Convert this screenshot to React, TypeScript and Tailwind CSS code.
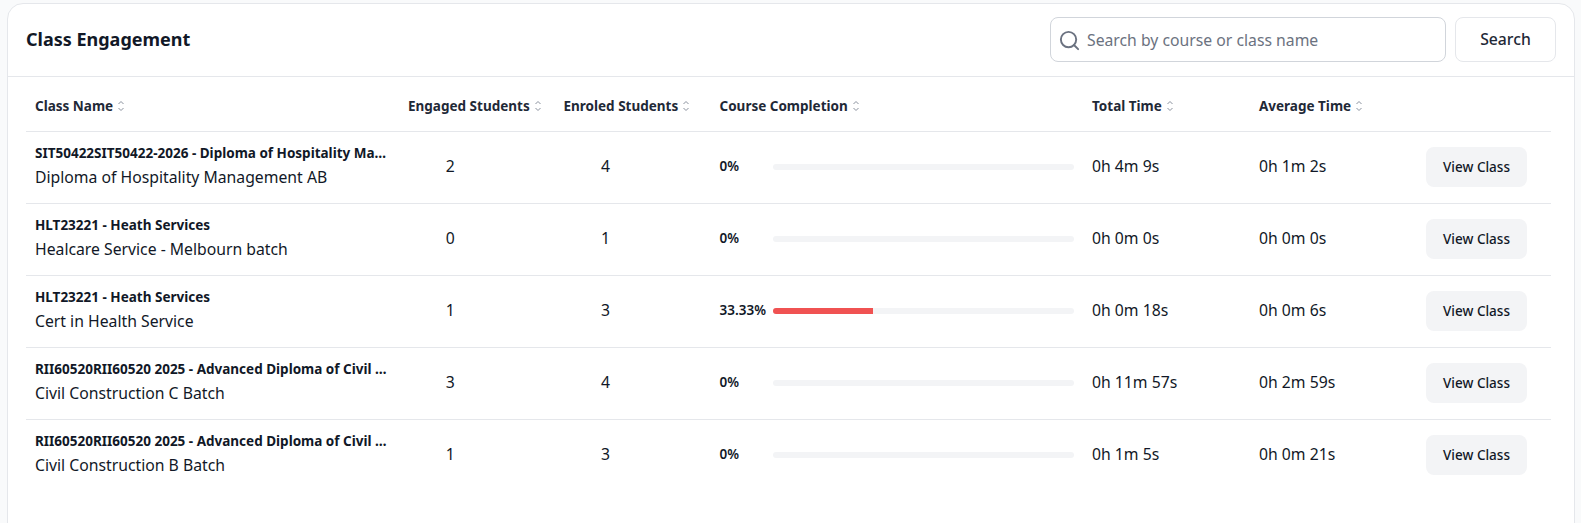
import React from 'react';
import { Search } from 'lucide-react';

interface ClassRow {
  course: string;
  name: string;
  engaged: number;
  enroled: number;
  completion: number;
  total: string;
  average: string;
}

const rows: ClassRow[] = [
  { course: 'SIT50422SIT50422-2026 - Diploma of Hospitality Management', name: 'Diploma of Hospitality Management AB', engaged: 2, enroled: 4, completion: 0, total: '0h 4m 9s', average: '0h 1m 2s' },
  { course: 'HLT23221 - Heath Services', name: 'Healcare Service - Melbourn batch', engaged: 0, enroled: 1, completion: 0, total: '0h 0m 0s', average: '0h 0m 0s' },
  { course: 'HLT23221 - Heath Services', name: 'Cert in Health Service', engaged: 1, enroled: 3, completion: 33.33, total: '0h 0m 18s', average: '0h 0m 6s' },
  { course: 'RII60520RII60520 2025 - Advanced Diploma of Civil Construction', name: 'Civil Construction C Batch', engaged: 3, enroled: 4, completion: 0, total: '0h 11m 57s', average: '0h 2m 59s' },
  { course: 'RII60520RII60520 2025 - Advanced Diploma of Civil Construction', name: 'Civil Construction B Batch', engaged: 1, enroled: 3, completion: 0, total: '0h 1m 5s', average: '0h 0m 21s' },
];

const SortIcon = () => (
  <svg width="8" height="12" viewBox="0 0 8 12" fill="none" stroke="#8b929e" strokeWidth="1" className="ml-[4px] shrink-0">
    <path d="M1.5 4 L4 1.5 L6.5 4" />
    <path d="M1.5 8 L4 10.5 L6.5 8" />
  </svg>
);

const HeaderCell = ({ label }: { label: string }) => (
  <th className="px-[9px] pt-[4px] text-left font-bold">
    <div className="flex items-center whitespace-nowrap">
      {label}
      <SortIcon />
    </div>
  </th>
);

const App: React.FC = () => {
  return (
    <div className="h-[523px] overflow-hidden bg-[#f9fafb] pl-[7px] pr-[6px] pt-[3px] font-['Noto_Sans',sans-serif] text-[#111827]">
      <div className="h-[560px] rounded-2xl border border-[#e5e7eb] bg-white">
        <div className="flex h-[73px] items-start justify-between border-b border-[#e5e7eb] pl-[18px] pr-[18px] pt-[13px]">
          <h2 className="mt-[9px] text-[18px] font-bold">Class Engagement</h2>
          <div className="flex items-center gap-[9px]">
            <div className="flex h-[45px] w-[396px] items-center gap-[6px] rounded-lg border border-[#d1d5db] px-[7px]">
              <Search className="mt-[2px] h-[23px] w-[23px] shrink-0 text-[#6b7280]" strokeWidth={2} />
              <input
                placeholder="Search by course or class name"
                className="w-full bg-transparent pt-[2px] text-[15.75px] outline-none placeholder:text-[#6b7280]"
              />
            </div>
            <button className="h-[45px] w-[101px] rounded-lg border border-[#e5e7eb] bg-white pt-[1px] text-[15.75px] font-medium text-[#1f2937]">
              Search
            </button>
          </div>
        </div>

        <div className="pl-[18px] pr-[23px]">
          <table className="w-full table-fixed border-collapse">
            <colgroup>
              <col className="w-[373px]" />
              <col className="w-[155.5px]" />
              <col className="w-[156px]" />
              <col className="w-[372.5px]" />
              <col className="w-[167px]" />
              <col className="w-[167px]" />
              <col />
            </colgroup>
            <thead>
              <tr className="h-[54px] border-b border-[#e5e7eb] text-[13.5px] text-[#1f2937]">
                <HeaderCell label="Class Name" />
                <HeaderCell label="Engaged Students" />
                <HeaderCell label="Enroled Students" />
                <HeaderCell label="Course Completion" />
                <HeaderCell label="Total Time" />
                <HeaderCell label="Average Time" />
                <th />
              </tr>
            </thead>
            <tbody>
              {rows.map((row, i) => (
                <tr key={i} className="h-[72px] border-b border-[#e5e7eb] text-[15.75px] last:border-b-0">
                  <td className="px-[9px] pb-[2px]">
                    <div className="truncate text-[13.5px] font-bold leading-[18px]">{row.course}</div>
                    <div className="mt-[3px] truncate leading-[24px]">{row.name}</div>
                  </td>
                  <td className="pl-[9px] pr-[62px] text-center">{row.engaged}</td>
                  <td className="pl-[9px] pr-[63px] text-center">{row.enroled}</td>
                  <td className="px-[9px]">
                    <div className="flex items-center">
                      <span className="w-[53.5px] shrink-0 pb-[2px] text-[13.5px] font-semibold">{row.completion}%</span>
                      <div className="h-[6px] flex-1 rounded-full bg-[#f3f4f6]">
                        <div className="h-full rounded-l-full bg-[#f05252]" style={{ width: `${row.completion}%` }} />
                      </div>
                    </div>
                  </td>
                  <td className="px-[9px]">{row.total}</td>
                  <td className="px-[9px]">{row.average}</td>
                  <td className="px-[9px]">
                    <button className="block h-[40px] w-[101px] rounded-lg bg-[#f3f4f6] text-[13.5px] font-medium text-[#111827]">
                      View Class
                    </button>
                  </td>
                </tr>
              ))}
            </tbody>
          </table>
        </div>
      </div>
    </div>
  );
};

export default App;
